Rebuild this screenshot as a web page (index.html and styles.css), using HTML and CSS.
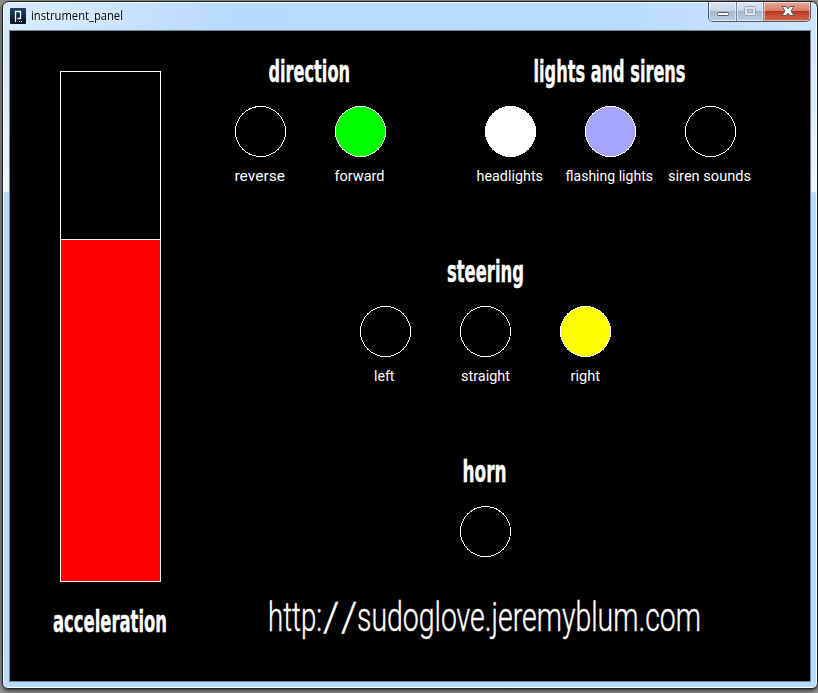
FILE: index.html
```html
<!DOCTYPE html>
<html lang="en">
<head>
<meta charset="utf-8">
<title>instrument_panel</title>
<link rel="stylesheet" href="styles.css">
</head>
<body>
<div class="window">
  <header class="titlebar">
    <svg class="app-icon" width="16" height="16" viewBox="0 0 16 16">
      <defs><linearGradient id="app" x2="0" y2="1"><stop stop-color="#1d446b"/><stop offset="1" stop-color="#030d1c"/></linearGradient></defs>
      <rect width="16" height="16" rx="1" fill="url(#app)"/>
      <path d="M5.5 14V3.500H10.500V10.500H7.500" fill="none" stroke="#fff" stroke-width="1.300"/>
      <path d="M9 13h1v1H9zM11 13h1v1h-1z" fill="#fff"/>
    </svg>
    <svg class="title" width="110" height="20"><text x="0" y="14" textLength="92" lengthAdjust="spacingAndGlyphs">instrument_panel</text></svg>
    <div class="controls">
      <div class="control minimize"><svg width="28" height="19"><rect x="8.500" y="10.500" width="11" height="3" rx="1" fill="#fff" stroke="#535666"/></svg></div>
      <div class="control maximize"><svg width="26" height="19"><rect x="7.500" y="4.500" width="11" height="9" rx="1" fill="#dce3ec" stroke="#9da8b9"/><rect x="10.500" y="7.500" width="5" height="3" fill="#c0ccdb" stroke="#9da8b9"/></svg></div>
      <div class="control close"><svg width="46" height="19"><path d="M18 4.500h4l2 2.300 2-2.300h4l-3 4.500 3 4.500h-4l-2-2.300-2 2.300h-4l3-4.500z" fill="#fff" stroke="#535666"/></svg></div>
    </div>
  </header>
  <main class="panel">
    <section class="throttle">
      <svg class="gauge" width="101" height="511" shape-rendering="crispEdges"><rect x=".5" y=".5" width="100" height="510" fill="#000" stroke="#fff"/><rect x=".5" y="168.500" width="100" height="342" fill="#f00" stroke="#fff"/></svg>
      <svg class="heading" width="200" height="40"><text x="43" y="31" textLength="114" lengthAdjust="spacingAndGlyphs">acceleration</text></svg>
    </section>
    <div class="groups">
      <div class="row top">
        <section class="group">
          <svg class="heading" width="200" height="40"><text x="58.500" y="31" textLength="81.500" lengthAdjust="spacingAndGlyphs">direction</text></svg>
          <div class="lamps">
            <div class="lamp"><svg class="bulb" width="51" height="51"><circle cx="25.500" cy="25.500" r="25"/></svg><svg class="label" width="100" height="24"><text x="24.500" y="15" textLength="50.500" lengthAdjust="spacingAndGlyphs">reverse</text></svg></div>
            <div class="lamp"><svg class="bulb green" width="51" height="51"><circle cx="25.500" cy="25.500" r="25"/></svg><svg class="label" width="100" height="24"><text x="24.500" y="15" textLength="50" lengthAdjust="spacingAndGlyphs">forward</text></svg></div>
          </div>
        </section>
        <section class="group">
          <svg class="heading" width="300" height="40"><text x="73.500" y="31" textLength="152" lengthAdjust="spacingAndGlyphs">lights and sirens</text></svg>
          <div class="lamps">
            <div class="lamp"><svg class="bulb white" width="51" height="51"><circle cx="25.500" cy="25.500" r="25"/></svg><svg class="label" width="100" height="24"><text x="16.500" y="15" textLength="66.500" lengthAdjust="spacingAndGlyphs">headlights</text></svg></div>
            <div class="lamp"><svg class="bulb violet" width="51" height="51"><circle cx="25.500" cy="25.500" r="25"/></svg><svg class="label" width="100" height="24"><text x="5.500" y="15" textLength="87.500" lengthAdjust="spacingAndGlyphs">flashing lights</text></svg></div>
            <div class="lamp"><svg class="bulb" width="51" height="51"><circle cx="25.500" cy="25.500" r="25"/></svg><svg class="label" width="100" height="24"><text x="8" y="15" textLength="83" lengthAdjust="spacingAndGlyphs">siren sounds</text></svg></div>
          </div>
        </section>
      </div>
      <div class="row">
        <section class="group">
          <svg class="heading" width="300" height="40"><text x="112" y="31" textLength="77" lengthAdjust="spacingAndGlyphs">steering</text></svg>
          <div class="lamps">
            <div class="lamp"><svg class="bulb" width="51" height="51"><circle cx="25.500" cy="25.500" r="25"/></svg><svg class="label" width="100" height="24"><text x="39" y="15" textLength="20.500" lengthAdjust="spacingAndGlyphs">left</text></svg></div>
            <div class="lamp"><svg class="bulb" width="51" height="51"><circle cx="25.500" cy="25.500" r="25"/></svg><svg class="label" width="100" height="24"><text x="26" y="15" textLength="49" lengthAdjust="spacingAndGlyphs">straight</text></svg></div>
            <div class="lamp"><svg class="bulb yellow" width="51" height="51"><circle cx="25.500" cy="25.500" r="25"/></svg><svg class="label" width="100" height="24"><text x="35.500" y="15" textLength="29.500" lengthAdjust="spacingAndGlyphs">right</text></svg></div>
          </div>
        </section>
      </div>
      <div class="row last">
        <section class="group">
          <svg class="heading" width="100" height="40"><text x="27.500" y="31" textLength="44" lengthAdjust="spacingAndGlyphs">horn</text></svg>
          <div class="lamps"><div class="lamp"><svg class="bulb" width="51" height="51"><circle cx="25.500" cy="25.500" r="25"/></svg></div></div>
        </section>
      </div>
      <svg class="url" width="550" height="60"><text y="40"><tspan x="58" textLength="54" lengthAdjust="spacingAndGlyphs">http:</tspan><tspan x="113 131">//</tspan><tspan x="147" textLength="344" lengthAdjust="spacingAndGlyphs">sudoglove.jeremyblum.com</tspan></text></svg>
    </div>
  </main>
</div>
</body>
</html>
```
FILE: styles.css
```css
* { box-sizing: border-box; }
body {
  margin: 0;
  height: 693px;
  padding: 1px 0 0 2px;
  overflow: hidden;
  background: linear-gradient(#8d8d8a, #858585 90%, #9a9a9a);
}
svg { display: block; flex: none; overflow: visible; }
.window {
  width: 816px;
  height: 688px;
  padding: 0 6px 6px;
  border: 1px solid #1c2630;
  border-radius: 7px 7px 6px 6px;
  background:
    linear-gradient(90deg, #d9ecff 0, #b9dafb 28%, #b9dbfd 75%, #cfe5fc 100%) 0 0 / 100% 28px no-repeat,
    linear-gradient(#cfe5fc 0, #dcecfb 100px, #f0f7fe 189px, #b7dafe 191px, #b7dafe);
  box-shadow: inset 0 0 0 1px #f4faff, 0 2px 4px #333;
}
.titlebar {
  height: 28px;
  display: flex;
  align-items: flex-start;
  padding-left: 1px;
}
.app-icon { margin-top: 6px; }
.title { margin: 4px 0 0 5px; filter: drop-shadow(0 0 5px #fff); }
.title text { font: 12px "Open Sans", "Noto Sans", sans-serif; fill: #000; }
.controls {
  display: flex;
  width: 103px;
  height: 20px;
  margin-left: auto;
  border: 1px solid #515c6b;
  border-top: 0;
  border-radius: 0 0 5px 5px;
  overflow: hidden;
}
.control { box-shadow: inset 0 0 0 1px rgba(255,255,255,.5); }
.minimize, .maximize {
  background: linear-gradient(#dce7f3 0, #c6d5e5 45%, #a5b9ce 50%, #bdd0e4 100%);
  border-right: 1px solid #7c8a9c;
}
.minimize { width: 28px; }
.maximize { width: 27px; }
.close { width: 46px; background: linear-gradient(#e9a99c 0, #d97c69 45%, #bd3923 50%, #d4674e 100%); }
.panel {
  display: flex;
  width: 802px;
  height: 652px;
  border: 1px solid #6f8495;
  background: #000;
}
.throttle { width: 200px; padding-top: 40px; }
.gauge { margin-left: 50px; }
.throttle .heading { margin-top: 19px; }
.groups { width: 550px; padding-top: 20px; }
.row { height: 200px; display: flex; justify-content: center; }
.row.top { justify-content: space-between; }
.row.last { height: 120px; }
.heading text {
  font: bold 30px "DejaVu Sans Condensed", "DejaVu Sans", sans-serif;
  fill: #fff;
  stroke: #fff;
  stroke-width: .4px;
}
.lamps { display: flex; margin-top: 15px; }
.lamp { width: 100px; }
.bulb { margin-left: 25px; shape-rendering: crispEdges; fill: #000; stroke: #fff; }
.green { fill: #0f0; }
.white { fill: #fff; }
.violet { fill: #a5a5ff; }
.yellow { fill: #ff0; }
.label { margin-top: 9px; }
.label text { font: 15px Roboto, sans-serif; fill: #fff; }
.url { margin-top: 20px; }
.url text { font: 300 41px Roboto, sans-serif; fill: #fff; stroke: #fff; stroke-width: .4px; }
```
